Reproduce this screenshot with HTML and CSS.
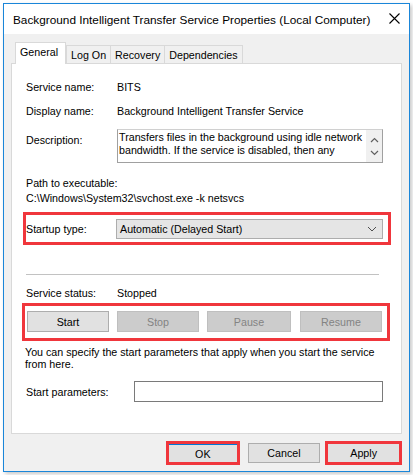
FILE: index.html
```html
<html>
<head>
<meta charset="UTF-8">
<link rel="stylesheet" href="styles.css">
</head>
<body>
<div class="window">
    <div class="titlebar">
        <span class="title">Background Intelligent Transfer Service Properties (Local Computer)</span>
        <svg class="close" width="11" height="11" viewBox="0 0 11 11"><path d="M0.5 0.5L10.5 10.5M10.5 0.5L0.5 10.5" stroke="#000" stroke-width="1.1"/></svg>
    </div>
    <div class="client">
        <div class="tabs">
            <div class="tab active">General</div>
            <div class="tab">Log On</div>
            <div class="tab">Recovery</div>
            <div class="tab">Dependencies</div>
        </div>
        <div class="panel">
            <div class="row r-name"><span class="lbl">Service name:</span><span>BITS</span></div>
            <div class="row r-display"><span class="lbl">Display name:</span><span>Background Intelligent Transfer Service</span></div>
            <div class="row r-desc">
                <span class="lbl">Description:</span>
                <div class="descbox">
                    <div class="desctext">Transfers files in the background using idle network bandwidth. If the service is disabled, then any</div>
                    <div class="scroll">
                        <svg width="9" height="6" viewBox="0 0 9 6"><path d="M1 5L4.5 1.5L8 5" fill="none" stroke="#606060" stroke-width="1.2"/></svg>
                        <svg width="9" height="6" viewBox="0 0 9 6"><path d="M1 1L4.5 4.5L8 1" fill="none" stroke="#606060" stroke-width="1.2"/></svg>
                    </div>
                </div>
            </div>
            <div class="path-lbl">Path to executable:</div>
            <div class="path">C:\Windows\System32\svchost.exe -k netsvcs</div>
            <div class="mark startup">
                <span class="lbl">Startup type:</span>
                <div class="combo">
                    <span>Automatic (Delayed Start)</span>
                    <svg width="10" height="6" viewBox="0 0 10 6"><path d="M1 1L5 5L9 1" fill="none" stroke="#505050" stroke-width="1"/></svg>
                </div>
            </div>
            <div class="sep"></div>
            <div class="row r-status"><span class="lbl">Service status:</span><span>Stopped</span></div>
            <div class="mark ctrl">
                <div class="btn">Start</div>
                <div class="btn off">Stop</div>
                <div class="btn off">Pause</div>
                <div class="btn off">Resume</div>
            </div>
            <div class="hint">You can specify the start parameters that apply when you start the service<br>from here.</div>
            <div class="row r-params"><span class="lbl">Start parameters:</span><div class="input"></div></div>
        </div>
        <div class="footer">
            <div class="mark fbtn"><div class="btn default">OK</div></div>
            <div class="btn cancel">Cancel</div>
            <div class="mark fbtn"><div class="btn">Apply</div></div>
        </div>
    </div>
</div>
</body>
</html>
```

FILE: styles.css
```css
* { margin: 0; padding: 0; box-sizing: border-box; }
body { background: #fff; font-family: "Liberation Sans", Arial, sans-serif; font-size: 10.7px; color: #000; }

.window { margin: 3px 0 0 3px; width: 407px; height: 469px; border: 1px solid #1a86d9; background: #f0f0f0; box-shadow: 2px 2px 4px rgba(0,0,0,0.22); }
.titlebar { height: 30px; background: #fff; display: flex; align-items: center; padding: 0 9px 0 9px; }
.titlebar .title { flex: 1; font-size: 11.8px; color: #000; white-space: nowrap; padding-top: 1px; }
.titlebar .close { margin-top: -1px; margin-right: 0; }

.client { padding: 7px 7px 0 7px; }
.tabs { display: flex; align-items: flex-end; padding-left: 4px; height: 22px; }
.tab { height: 18px; border: 1px solid #d9d9d9; border-bottom: none; margin-left: -1px; padding: 0 4px; display: flex; align-items: center; background: #f0f0f0; }
.tab.active { height: 22px; background: #fff; margin-left: 0; margin-right: 1px; padding: 0 7px 3px 4px; position: relative; z-index: 1; margin-bottom: -1px; }
.panel { background: #fff; border: 1px solid #d9d9d9; height: 371px; padding: 15px 0 0 14px; }

.row { display: flex; align-items: center; height: 15px; }
.lbl { width: 91px; flex: none; }
.r-display { margin-top: 9px; }
.r-desc { margin-top: 11px; height: 34px; align-items: flex-start; }
.r-desc .lbl { padding-top: 5px; }
.descbox { width: 266px; height: 34px; border: 1px solid #a0a0a0; border-top-color: #d0d0d0; display: flex; }
.desctext { flex: 1; padding: 1px 0 0 1px; line-height: 13px; }
.scroll { width: 16px; background: #f0f0f0; display: flex; flex-direction: column; justify-content: space-around; align-items: center; padding: 3px 0; }

.path-lbl { margin-top: 13px; height: 15px; line-height: 15px; }
.path { height: 15px; line-height: 15px; }

.mark { border: 3px solid #f0363c; }
.startup { margin: 6px 0 0 -3px; width: 368px; height: 33px; display: flex; align-items: center; padding-left: 0; }
.startup .lbl { width: 90px; }
.combo { width: 267px; height: 20px; background: #e5e5e5; border: 1px solid #adadad; display: flex; align-items: center; justify-content: space-between; padding: 0 5px 0 3px; }

.sep { margin: 29px 0 0 0; width: 353px; height: 1px; background: #c2c2c2; }
.r-status { margin-top: 10px; }

.ctrl { margin: 3px 0 0 -4px; width: 368px; height: 38px; display: flex; align-items: center; padding: 0 0 1px 2px; gap: 8px; }
.btn { width: 82px; height: 21px; background: #e1e1e1; border: 1px solid #adadad; display: flex; align-items: center; justify-content: center; }
.btn.off { background: #cccccc; border-color: #bfbfbf; color: #838383; }
.ctrl .btn:nth-child(3) { width: 84px; margin-right: 1px; }

.hint { margin: 5px 0 0 -1px; line-height: 12px; }
.r-params { margin-top: 11px; height: 21px; }
.r-params .lbl { width: 108px; }
.input { width: 249px; height: 21px; border: 1px solid #7a7a7a; background: #fff; }

.footer { display: flex; align-items: center; padding: 6px 0 0 155px; height: 32px; }
.fbtn { width: 74px; height: 24px; display: flex; }
.fbtn .btn { width: 100%; height: 100%; border: none; border-top: 1px solid #0078d7; }
.fbtn:last-child { width: 77px; margin-left: 5px; }
.fbtn:last-child .btn { border-top: none; }
.cancel { width: 73px; height: 20px; margin-left: 8px; }
```
